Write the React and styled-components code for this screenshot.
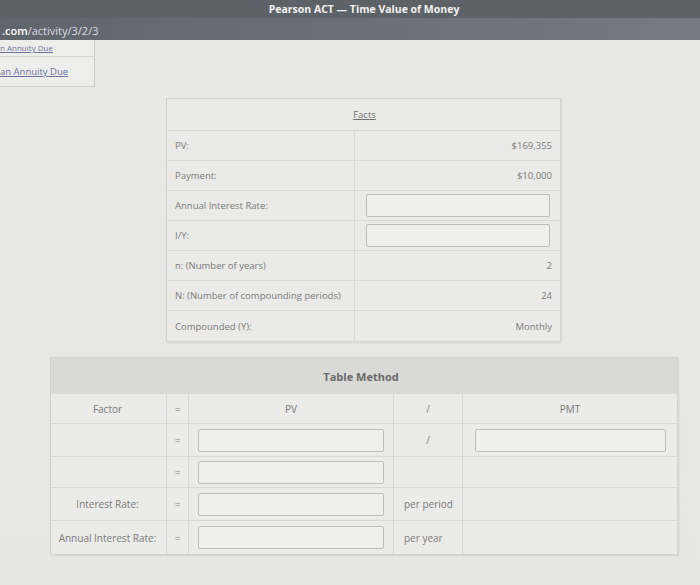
import React from "react";
import styled, { createGlobalStyle } from "styled-components";

const Global = createGlobalStyle`
  html, body {
    margin: 0;
    padding: 0;
    background: #e8e8e6;
    font-family: "Open Sans", "Noto Sans", sans-serif;
  }
`;

const Page = styled.div`
  width: 700px;
  height: 585px;
  overflow: hidden;
  display: flex;
  flex-direction: column;
  background: linear-gradient(180deg, #e9e9e7 0%, #e6e6e4 100%);
`;

const TitleBar = styled.div`
  height: 18px;
  background: #5d6268;
  color: #f2f2f2;
  font-size: 10.5px;
  font-weight: 700;
  display: flex;
  align-items: center;
  justify-content: center;
  padding-left: 28px;
`;

const AddressBar = styled.div`
  height: 22px;
  background: linear-gradient(90deg, #5f656c, #737a82);
  color: #d9dde2;
  font-size: 11px;
  display: flex;
  align-items: center;
  padding: 2px 0 0 2px;
  box-sizing: border-box;
  b {
    color: #ffffff;
    font-weight: 600;
  }
`;

const Tab = styled.div`
  width: 94px;
  height: 46px;
  border-right: 1px solid #c9c9c9;
  border-bottom: 1px solid #c9c9c9;
  background: #ededeb;
  display: flex;
  flex-direction: column;
`;

const TabLink = styled.a`
  display: block;
  color: #6f71a0;
  font-size: ${p => p.$size || 9.5}px;
  text-decoration: underline;
  white-space: nowrap;
  height: ${p => p.$h}px;
  line-height: ${p => p.$h}px;
  border-bottom: ${p => (p.$divider ? "1px solid #d6d6d6" : "none")};
`;

const Facts = styled.div`
  margin: 11px 0 0 166px;
  width: 393px;
  border: 1px solid #d2d2d0;
  display: grid;
  grid-template-columns: 188px 1fr;
  background: #eaeae8;
  box-shadow: 1px 1px 2px rgba(0, 0, 0, 0.08);
`;

const FactsHead = styled.div`
  grid-column: 1 / 3;
  height: 31px;
  display: flex;
  align-items: center;
  justify-content: center;
  padding-left: 2px;
  font-size: 9.5px;
  color: #707070;
  text-decoration: underline;
  border-bottom: 1px solid #d6d6d4;
`;

const Cell = styled.div`
  height: ${p => p.$h || 30}px;
  box-sizing: border-box;
  display: flex;
  align-items: center;
  justify-content: ${p => p.$align || "flex-start"};
  padding: 0 ${p => p.$pr ?? 8}px 0 ${p => p.$pl ?? 8}px;
  font-size: ${p => p.$size || 9.5}px;
  color: #7a7a7a;
  border-bottom: ${p => (p.$last ? "none" : "1px solid #d8d8d6")};
  border-right: ${p => (p.$br ? "1px solid #d8d8d6" : "none")};
  white-space: nowrap;
`;

const Input = styled.div`
  width: ${p => p.$w}px;
  height: 23px;
  box-sizing: border-box;
  border: 1px solid #bdbdbb;
  border-radius: 2px;
  background: #efefed;
`;

const Method = styled.div`
  margin: 15px 0 0 50px;
  width: 626px;
  border: 1px solid #d0d0ce;
  display: grid;
  grid-template-columns: 116px 22px 205px 69px 1fr;
  background: #ebebe9;
  box-shadow: 1px 1px 2px rgba(0, 0, 0, 0.08);
`;

const MethodHead = styled.div`
  grid-column: 1 / 6;
  height: 36px;
  display: flex;
  align-items: center;
  justify-content: center;
  padding-right: 6px;
  font-size: 11px;
  font-weight: 700;
  color: #6a6a6a;
  background: #d9d9d7;
`;

const factRows = [
  ["PV:", "$169,355"],
  ["Payment:", "$10,000"],
  ["Annual Interest Rate:", null],
  ["I/Y:", null],
  ["n: (Number of years)", "2"],
  ["N: (Number of compounding periods)", "24"],
  ["Compounded (Y):", "Monthly"],
];

const methodRows = [
  { h: 30, label: "Factor", mid: "PV", div: "/", right: "PMT" },
  { h: 33, label: "", mid: "input", div: "/", right: "input" },
  { h: 31, label: "", mid: "input", div: "", right: "" },
  { h: 33, label: "Interest Rate:", mid: "input", div: "per period", right: "" },
  { h: 33, label: "Annual Interest Rate:", mid: "input", div: "per year", right: "" },
];

export default function App() {
  return (
    <Page>
      <Global />
      <TitleBar>Pearson ACT — Time Value of Money</TitleBar>
      <AddressBar>
        <b>.com</b>/activity/3/2/3
      </AddressBar>
      <Tab>
        <TabLink $h={16} $size={8} $divider>
          n Annuity Due
        </TabLink>
        <TabLink $h={29}>an Annuity Due</TabLink>
      </Tab>

      <Facts>
        <FactsHead>Facts</FactsHead>
        {factRows.map(([label, value], i) => {
          const last = i === factRows.length - 1;
          return (
            <React.Fragment key={label}>
              <Cell $br $last={last} $pl={8}>
                {label}
              </Cell>
              <Cell $align={value === null ? "center" : "flex-end"} $last={last} $pr={8}>
                {value === null ? <Input $w={184} /> : value}
              </Cell>
            </React.Fragment>
          );
        })}
      </Facts>

      <Method>
        <MethodHead>Table Method</MethodHead>
        {methodRows.map((r, i) => {
          const last = i === methodRows.length - 1;
          const isText = r.div.startsWith("per");
          return (
            <React.Fragment key={i}>
              <Cell $h={r.h} $size={10} $align="center" $br $last={last} $pl={2} $pr={4}>
                {r.label}
              </Cell>
              <Cell $h={r.h} $size={10} $align="center" $br $last={last} $pl={0} $pr={0}>
                =
              </Cell>
              <Cell $h={r.h} $size={10} $align="center" $br $last={last} $pl={0} $pr={0}>
                {r.mid === "input" ? <Input $w={186} /> : r.mid}
              </Cell>
              <Cell
                $h={r.h}
                $size={10}
                $align={isText ? "flex-start" : "center"}
                $br
                $last={last}
                $pl={isText ? 10 : 0}
                $pr={0}
              >
                {r.div}
              </Cell>
              <Cell $h={r.h} $size={10} $align="center" $last={last} $pl={0} $pr={0}>
                {r.right === "input" ? <Input $w={191} /> : r.right}
              </Cell>
            </React.Fragment>
          );
        })}
      </Method>
    </Page>
  );
}
